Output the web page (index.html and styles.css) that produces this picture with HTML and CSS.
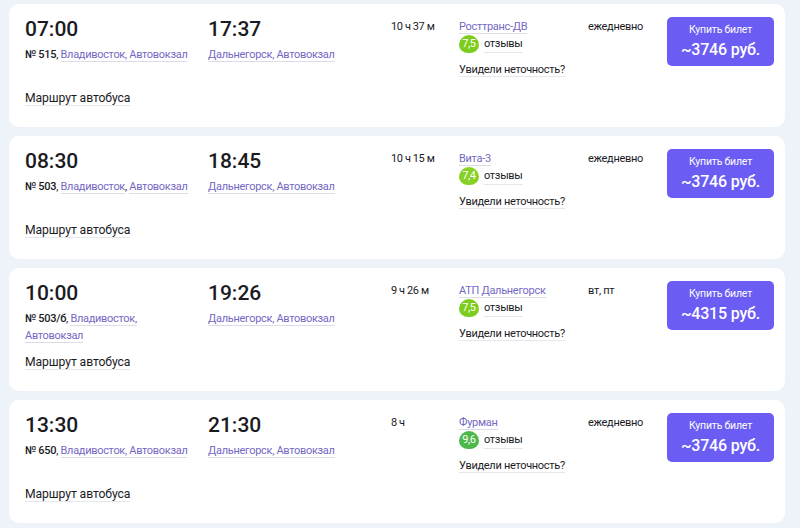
FILE: index.html
```html
<!DOCTYPE html>
<html lang="ru">
<head>
<meta charset="utf-8">
<title>Расписание автобусов</title>
<link rel="stylesheet" href="styles.css">
</head>
<body>
<div class="list">

  <div class="trip">
    <div class="col dep">
      <div class="time">07:00</div>
      <div class="station"><b>№ 515</b>, <span class="link">Владивосток, Автовокзал</span></div>
      <div class="route"><span class="ul">Маршрут автобуса</span></div>
    </div>
    <div class="col arr">
      <div class="time">17:37</div>
      <div class="station"><span class="link">Дальнегорск, Автовокзал</span></div>
    </div>
    <div class="col dur">10 ч 37 м</div>
    <div class="col carrier">
      <div class="cname"><span class="link">Росттранс-ДВ</span></div>
      <div class="rating"><span class="badge b75">7,5</span><span class="ul">отзывы</span></div>
      <div class="report"><span class="ul">Увидели неточность?</span></div>
    </div>
    <div class="col days">ежедневно</div>
    <div class="col buy"><a class="btn" href="#"><span class="bt">Купить билет</span><span class="price">~3746 руб.</span></a></div>
  </div>

  <div class="trip">
    <div class="col dep">
      <div class="time">08:30</div>
      <div class="station"><b>№ 503</b>, <span class="link">Владивосток</span>, <span class="link">Автовокзал</span></div>
      <div class="route"><span class="ul">Маршрут автобуса</span></div>
    </div>
    <div class="col arr">
      <div class="time">18:45</div>
      <div class="station"><span class="link">Дальнегорск, Автовокзал</span></div>
    </div>
    <div class="col dur">10 ч 15 м</div>
    <div class="col carrier">
      <div class="cname"><span class="link">Вита-3</span></div>
      <div class="rating"><span class="badge b74">7,4</span><span class="ul">отзывы</span></div>
      <div class="report"><span class="ul">Увидели неточность?</span></div>
    </div>
    <div class="col days">ежедневно</div>
    <div class="col buy"><a class="btn" href="#"><span class="bt">Купить билет</span><span class="price">~3746 руб.</span></a></div>
  </div>

  <div class="trip">
    <div class="col dep">
      <div class="time">10:00</div>
      <div class="station"><b>№ 503/б</b>, <span class="link">Владивосток,</span> <span class="link">Автовокзал</span></div>
      <div class="route"><span class="ul">Маршрут автобуса</span></div>
    </div>
    <div class="col arr">
      <div class="time">19:26</div>
      <div class="station"><span class="link">Дальнегорск, Автовокзал</span></div>
    </div>
    <div class="col dur">9 ч 26 м</div>
    <div class="col carrier">
      <div class="cname"><span class="link">АТП Дальнегорск</span></div>
      <div class="rating"><span class="badge b75">7,5</span><span class="ul">отзывы</span></div>
      <div class="report"><span class="ul">Увидели неточность?</span></div>
    </div>
    <div class="col days">вт, пт</div>
    <div class="col buy"><a class="btn" href="#"><span class="bt">Купить билет</span><span class="price">~4315 руб.</span></a></div>
  </div>

  <div class="trip">
    <div class="col dep">
      <div class="time">13:30</div>
      <div class="station"><b>№ 650</b>, <span class="link">Владивосток, Автовокзал</span></div>
      <div class="route"><span class="ul">Маршрут автобуса</span></div>
    </div>
    <div class="col arr">
      <div class="time">21:30</div>
      <div class="station"><span class="link">Дальнегорск, Автовокзал</span></div>
    </div>
    <div class="col dur">8 ч</div>
    <div class="col carrier">
      <div class="cname"><span class="link">Фурман</span></div>
      <div class="rating"><span class="badge b96">9,6</span><span class="ul">отзывы</span></div>
      <div class="report"><span class="ul">Увидели неточность?</span></div>
    </div>
    <div class="col days">ежедневно</div>
    <div class="col buy"><a class="btn" href="#"><span class="bt">Купить билет</span><span class="price">~3746 руб.</span></a></div>
  </div>

</div>
</body>
</html>
```

FILE: styles.css
```css
* { box-sizing: border-box; }
html, body { margin: 0; padding: 0; }
body {
  background: #eef2f9;
  font-family: Roboto, "Liberation Sans", sans-serif;
  color: #1b1b1f;
  overflow: hidden;
}
.list {
  display: flex;
  flex-direction: column;
  gap: 9px;
  padding: 4px 15px 0 9px;
}
.trip {
  background: #fff;
  border-radius: 10px;
  height: 123px;
  padding: 13px 11px 0 16px;
  display: grid;
  grid-template-columns: 183px 183px 68px 129px 79px 107px;
  align-items: start;
}
.dep { padding-right: 16px; }
.time {
  font-size: 21px;
  font-weight: 500;
  line-height: 22px;
  margin-top: 1px;
}
.station {
  font-size: 11px;
  letter-spacing: -0.3px;
  line-height: 17px;
  margin-top: 6px;
  min-height: 34px;
}
.station b { font-weight: 500; }
.link {
  color: #7468c4;
  border-bottom: 1px solid #dcdce6;
}
.ul { border-bottom: 1px solid #e6e6ee; }
.route {
  font-size: 12.2px;
  line-height: 18px;
  margin-top: 9px;
  letter-spacing: -0.1px;
}
.dur {
  font-size: 11px;
  letter-spacing: -0.4px;
  line-height: 16px;
  padding-top: 2px;
}
.carrier { font-size: 11px; letter-spacing: -0.3px; line-height: 16px; padding-top: 2px; }
.cname { line-height: 16px; }
.rating {
  display: flex;
  align-items: center;
  gap: 5px;
  margin-top: 0;
}
.badge {
  display: inline-flex;
  align-items: center;
  justify-content: center;
  width: 20px;
  height: 18px;
  border-radius: 50% 50% 46% 46% / 55% 55% 45% 45%;
  color: #fff;
  font-size: 11px;
  letter-spacing: -0.4px;
}
.b75 { background: #7dcd1e; }
.b74 { background: #86d123; }
.b96 { background: #4db84a; }
.report {
  margin-top: 9px;
}
.days {
  font-size: 11px;
  letter-spacing: -0.3px;
  line-height: 16px;
  padding-top: 2px;
}
.btn {
  display: flex;
  flex-direction: column;
  align-items: center;
  justify-content: center;
  height: 49px;
  background: #6b5cf3;
  border-radius: 5px;
  color: #fff;
  text-decoration: none;
}
.bt { font-size: 10.5px; line-height: 14px; letter-spacing: -0.2px; }
.price { font-size: 16px; font-weight: 500; line-height: 21px; margin-top: 2px; letter-spacing: -0.2px; }
```
